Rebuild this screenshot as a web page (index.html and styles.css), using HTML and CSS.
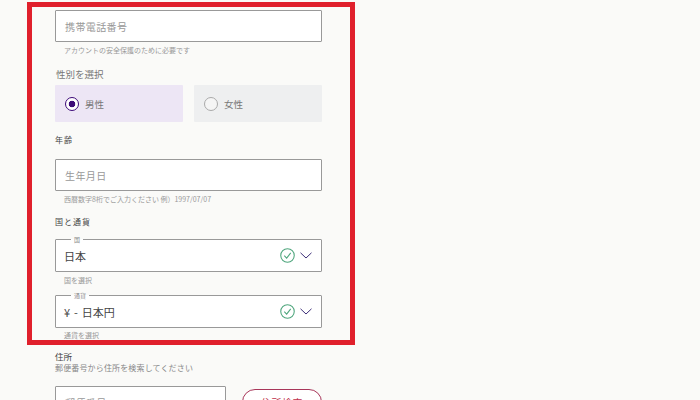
FILE: index.html
```html
<!DOCTYPE html>
<html lang="ja">
<head>
<meta charset="utf-8">
<title>登録フォーム</title>
<link rel="stylesheet" href="styles.css">
</head>
<body>
<div class="highlight"></div>
<main class="form">
  <div class="input first"><span class="placeholder">携帯電話番号</span></div>
  <p class="help">アカウントの安全保護のために必要です</p>
  <p class="label gender-label">性別を選択</p>
  <div class="radios">
    <div class="radio on"><span class="dot"></span><span>男性</span></div>
    <div class="radio"><span class="dot"></span><span>女性</span></div>
  </div>
  <p class="heading age">年齢</p>
  <div class="input"><span class="placeholder">生年月日</span></div>
  <p class="help">西暦数字8桁でご入力ください&nbsp;例）1997/07/07</p>
  <p class="heading country">国と通貨</p>
  <fieldset class="select">
    <legend>国</legend>
    <span class="value">日本</span>
    <svg class="check" viewBox="0 0 14 14"><circle cx="7" cy="7" r="6.3"/><path d="M4 7.2l2.2 2.3L10 4.6"/></svg>
    <svg class="chev" viewBox="0 0 12 7"><path d="M.5.8L6 6l5.5-5.2"/></svg>
  </fieldset>
  <p class="help">国を選択</p>
  <fieldset class="select second">
    <legend>通貨</legend>
    <span class="value">¥ - 日本円</span>
    <svg class="check" viewBox="0 0 14 14"><circle cx="7" cy="7" r="6.3"/><path d="M4 7.2l2.2 2.3L10 4.6"/></svg>
    <svg class="chev" viewBox="0 0 12 7"><path d="M.5.8L6 6l5.5-5.2"/></svg>
  </fieldset>
  <p class="help tight">通貨を選択</p>
  <p class="heading address">住所</p>
  <p class="sub">郵便番号から住所を検索してください</p>
  <div class="zip-row">
    <div class="input zip"><span class="placeholder">郵便番号</span></div>
    <button class="search">住所検索</button>
  </div>
</main>
</body>
</html>
```
FILE: styles.css
```css
html, body { margin: 0; height: 400px; overflow: hidden; }
body {
  position: relative;
  background: #fafaf8;
  font-family: "Noto Sans CJK JP", "Noto Sans", sans-serif;
  color: #555;
}
p { margin: 0; }
.highlight {
  position: absolute;
  left: 27px; top: 2px;
  width: 318px; height: 333px;
  border: 5px solid #e0202c;
}
.form { width: 267px; margin-left: 55px; padding-top: 10px; }
.input {
  box-sizing: border-box;
  height: 32px;
  background: #fff;
  border: 1px solid #999;
  border-radius: 1px;
  padding: 0 9px;
  display: flex;
  align-items: center;
}
.placeholder { font-size: 10px; letter-spacing: .4px; color: #999; }
.help { font-size: 7px; line-height: 10px; color: #999; padding-left: 9px; margin-top: 3px; }
.help.tight { margin-top: 2px; }
.label { font-size: 9.5px; line-height: 14px; color: #777; }
.gender-label { margin-top: 12px; padding-left: 1px; }
.radios { display: flex; gap: 11px; margin-top: 4px; }
.radio {
  flex: 1;
  height: 37px;
  box-sizing: border-box;
  background: #eeeff0;
  border-radius: 1px;
  display: flex;
  align-items: center;
  gap: 6px;
  padding-left: 10px;
  font-size: 9.5px;
  color: #777;
}
.radio.on { background: #ede6f5; }
.dot {
  box-sizing: border-box;
  width: 14px; height: 14px;
  border-radius: 50%;
  border: 1px solid #aaa;
  background: #f5f5f5;
}
.on .dot {
  border: 1.5px solid #3d0a78;
  background: radial-gradient(circle, #3d0a78 0 3px, #fff 3.6px);
}
.heading { font-size: 8px; line-height: 12px; letter-spacing: 1px; color: #444; }
.age { margin-top: 12px; margin-bottom: 13px; }
.country { margin-top: 12px; margin-bottom: 11px; }
.select {
  box-sizing: border-box;
  position: relative;
  height: 33px;
  margin: 0;
  padding: 0 9px;
  background: #fff;
  border: 1px solid #999;
  border-radius: 1px;
  display: flex;
  align-items: center;
  min-width: 0;
}
.select legend {
  font-size: 6px;
  line-height: 1px;
  height: 1px;
  padding: 0 3px;
  margin-left: 6px;
  color: #888;
}
.value { font-size: 11px; color: #444; flex: 1; word-spacing: 1.5px; margin-left: -1px; }
.check { width: 15px; height: 15px; fill: none; stroke: #4fa67d; stroke-width: 1; margin-right: 5px; }
.chev { width: 12px; height: 7px; fill: none; stroke: #3d2f78; stroke-width: 1; margin-right: 0; }
.second { margin-top: 10px; }
.address { margin-top: 10px; letter-spacing: 0; font-size: 8.5px; }
.sub { font-size: 8px; line-height: 12px; letter-spacing: .15px; color: #888; }
.zip-row { display: flex; justify-content: space-between; align-items: flex-start; margin-top: 12px; }
.zip { width: 171px; }
.search {
  width: 80px; height: 26px;
  margin-top: 3px;
  background: #fff;
  border: 1px solid #a8365a;
  border-radius: 13px;
  color: #c0304a;
  font: 10px "Noto Sans CJK JP", sans-serif;
  letter-spacing: .5px;
}
```
